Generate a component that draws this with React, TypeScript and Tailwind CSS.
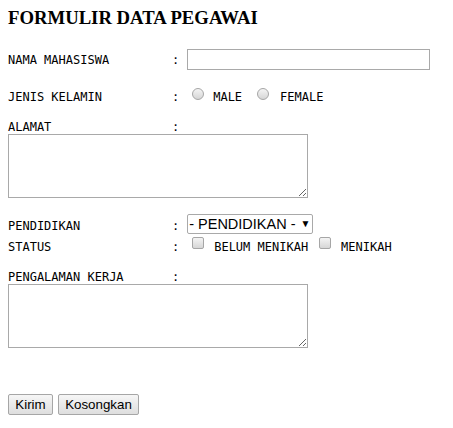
const mono = "font-['DejaVu_Sans_Mono',monospace] text-[12px] leading-[14px] text-black whitespace-pre";

function Radio({ className = "" }: { className?: string }) {
  return (
    <span
      className={`block w-[12px] h-[12px] shrink-0 rounded-full border border-[#a6a6a6] bg-gradient-to-b from-[#f4f4f4] to-[#d6d6d6] ${className}`}
    />
  );
}

function Check({ className = "" }: { className?: string }) {
  return (
    <span
      className={`block w-[12px] h-[12px] shrink-0 rounded-[2px] border border-[#a6a6a6] bg-gradient-to-b from-[#f4f4f4] to-[#d6d6d6] ${className}`}
    />
  );
}

function Label({ text, className = "" }: { text: string; className?: string }) {
  return (
    <>
      <span className={`${mono} w-[164px] shrink-0 ${className}`}>{text}</span>
      <span className={`${mono} w-[7.2px] shrink-0 text-center ${className}`}>:</span>
    </>
  );
}

export default function App() {
  return (
    <div className="w-[453px] h-[428px] bg-white pl-[8px] overflow-hidden">
      <h3 className="pt-[7px] h-[29px] font-['Liberation_Serif',serif] font-bold text-[18.72px] leading-[22px] text-black">
        FORMULIR DATA PEGAWAI
      </h3>

      {/* nama */}
      <div className="flex items-start mt-[20px] h-[21px]">
        <Label text="NAMA MAHASISWA" className="mt-[4px]" />
        <input
          type="text"
          className="ml-[8px] w-[243px] h-[21px] border border-[#a9a9a9] bg-white outline-none"
        />
      </div>

      {/* jenis kelamin */}
      <div className="flex items-start mt-[18px] h-[16px]">
        <Label text="JENIS KELAMIN" className="mt-[2px]" />
        <Radio className="ml-[13px]" />
        <span className={`${mono} ml-[9px] mt-[2px]`}>MALE</span>
        <Radio className="ml-[15px]" />
        <span className={`${mono} ml-[11px] mt-[2px]`}>FEMALE</span>
      </div>

      {/* alamat */}
      <div className="flex items-start mt-[16px] h-[14px]">
        <Label text="ALAMAT" />
      </div>
      <textarea className="block w-[300px] h-[64px] border border-[#a9a9a9] bg-white outline-none resize" />

      {/* pendidikan */}
      <div className="flex items-start mt-[16px] h-[20px]">
        <Label text="PENDIDIKAN" className="mt-[5px]" />
        <div className="ml-[8px] w-[126px] h-[20px] flex items-center border border-[#a9a9a9] rounded-[2px] bg-white pl-[1px] font-['Liberation_Sans',Arial,sans-serif] text-[14.5px] text-black">
          <span className="leading-none">- PENDIDIKAN -</span>
          <span className="ml-[5px] text-[10px] leading-none">▼</span>
        </div>
      </div>

      {/* status */}
      <div className="flex items-start mt-[3px] h-[17px]">
        <Label text="STATUS" className="mt-[3px]" />
        <Check className="ml-[13px]" />
        <span className={`${mono} ml-[10px] mt-[3px]`}>BELUM MENIKAH</span>
        <Check className="ml-[11px]" />
        <span className={`${mono} ml-[10px] mt-[3px]`}>MENIKAH</span>
      </div>

      {/* pengalaman kerja */}
      <div className="flex items-start mt-[16px] h-[14px]">
        <Label text="PENGALAMAN KERJA" />
      </div>
      <textarea className="block w-[300px] h-[64px] border border-[#a9a9a9] bg-white outline-none resize" />

      <div className="flex gap-[5px] mt-[46px]">
        <button className="w-[45px] h-[21px] border border-[#a6a6a6] rounded-[2px] bg-gradient-to-b from-[#f6f6f6] to-[#dedede] font-['Liberation_Sans',Arial,sans-serif] text-[13.33px] leading-none text-black">
          Kirim
        </button>
        <button className="w-[81px] h-[21px] border border-[#a6a6a6] rounded-[2px] bg-gradient-to-b from-[#f6f6f6] to-[#dedede] font-['Liberation_Sans',Arial,sans-serif] text-[13.33px] leading-none text-black">
          Kosongkan
        </button>
      </div>
    </div>
  );
}
